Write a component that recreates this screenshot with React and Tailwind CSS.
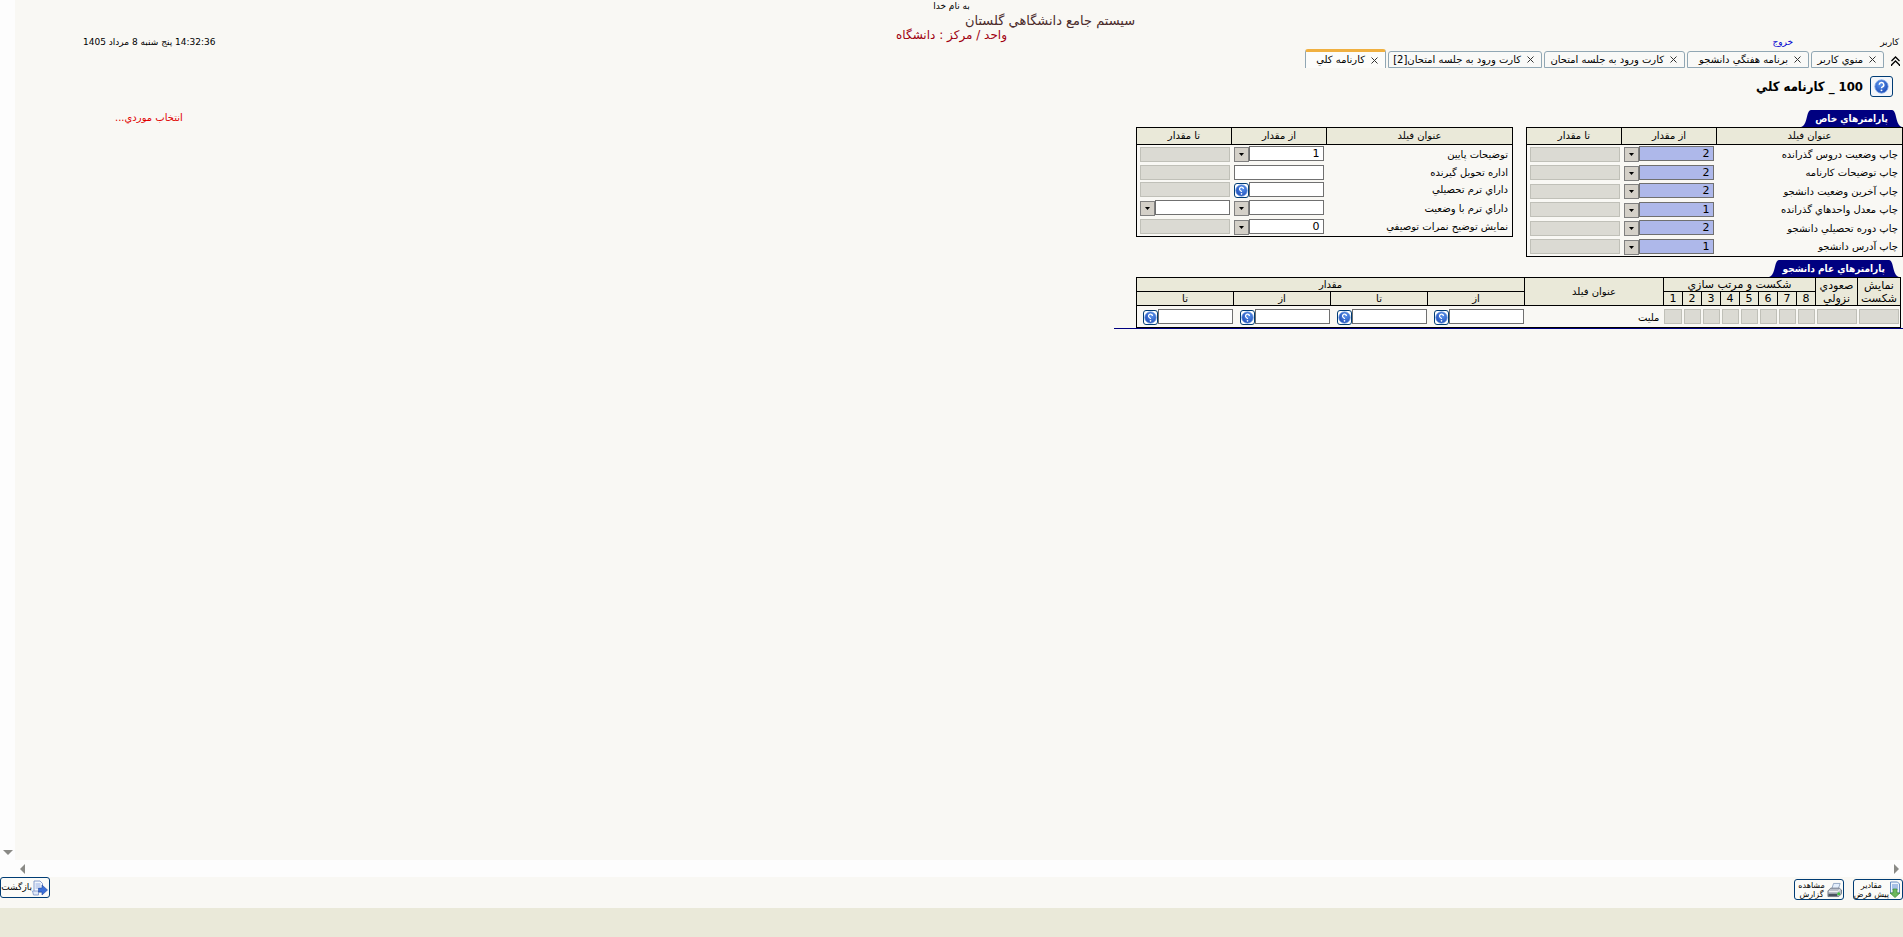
import React, { useState } from "react";

const specialParams = [
  { label: "چاپ وضعيت دروس گذرانده", from: "2" },
  { label: "چاپ توضيحات کارنامه", from: "2" },
  { label: "چاپ آخرين وضعيت دانشجو", from: "2" },
  { label: "چاپ معدل واحدهاي گذرانده", from: "1" },
  { label: "چاپ دوره تحصيلي دانشجو", from: "2" },
  { label: "چاپ آدرس دانشجو", from: "1" },
];

const extraParams = [
  { label: "توضيحات پايين", from: "1", picker: "list" },
  { label: "اداره تحويل گيرنده", from: "", picker: "none" },
  { label: "داراي ترم تحصيلي", from: "", picker: "help" },
  { label: "داراي ترم با وضعيت", from: "", picker: "list", to: true },
  { label: "نمايش توضيح نمرات توصيفي", from: "0", picker: "list" },
];

const tabs = [
  { title: "منوي کاربر", width: "w-[73px]" },
  { title: "برنامه هفتگي دانشجو", width: "w-[122px]" },
  { title: "کارت ورود به جلسه امتحان", width: "w-[141px]" },
  { title: "کارت ورود به جلسه امتحان[2]", width: "w-[154px]" },
  { title: "کارنامه کلي", width: "w-[81px]" },
];

const sortOrders = ["8", "7", "6", "5", "4", "3", "2", "1"];
const ranges = ["از", "تا", "از", "تا"];

const QuestionIcon = ({ flip }) => (
  <svg viewBox="0 0 14 14" className={flip ? "h-full w-full -scale-x-100" : "h-full w-full"}>
    <defs>
      <radialGradient id="ball" cx="40%" cy="35%" r="70%">
        <stop offset="0" stopColor="#5b95ee" />
        <stop offset="1" stopColor="#1c49b4" />
      </radialGradient>
    </defs>
    <circle cx="7" cy="7" r="6.2" fill="url(#ball)" stroke="#7ea7e6" strokeWidth="0.8" />
    <path d="M4.9 5.4a2.1 2.1 0 1 1 3 1.9c-.6.3-.9.6-.9 1.3" fill="none" stroke="#fff" strokeWidth="1.4" />
    <circle cx="7" cy="10.6" r="0.9" fill="#fff" />
  </svg>
);

const ListButton = ({ label }) => (
  <button
    type="button"
    aria-label={label}
    className="mt-px flex h-[15px] w-[15px] shrink-0 items-center justify-center border border-[#808080] bg-[#d4d0c8]"
  >
    <svg viewBox="0 0 5 3" className="h-[3px] w-[5px]">
      <path d="M0 0h5L2.5 3z" fill="#000" />
    </svg>
  </button>
);

const HelpButton = ({ label }) => (
  <button
    type="button"
    aria-label={label}
    className="mt-px h-[15px] w-[15px] shrink-0 rounded-[3px] border border-[#003c74] bg-white"
  >
    <QuestionIcon flip />
  </button>
);

const Field = ({ label, value = "", picker = "none", tint }) => (
  <div className="flex w-[90px] items-start">
    <input
      type="text"
      dir="ltr"
      aria-label={label}
      defaultValue={value}
      className={
        tint
          ? "h-[15px] min-w-0 flex-1 border border-[#707070] bg-[#aeb8ea] px-[3px] text-right text-[11px] leading-[13px] outline-none"
          : "h-[15px] min-w-0 flex-1 border border-[#707070] bg-white px-[3px] text-right text-[11px] leading-[13px] outline-none"
      }
    />
    {picker === "list" && <ListButton label={"فهرست " + label} />}
    {picker === "help" && <HelpButton label={"راهنماي " + label} />}
  </div>
);

const Disabled = ({ label }) => (
  <input
    type="text"
    disabled
    aria-label={label}
    className="block h-[15px] w-full border border-[#c0c0b8] bg-[#dbdad3]"
  />
);

const ParamTable = ({ rows, tint, size }) => (
  <table className={"w-[377px] table-fixed border-collapse border border-black text-[10px] leading-[14px] " + size}>
    <colgroup>
      <col />
      <col className="w-[95px]" />
      <col className="w-[95px]" />
    </colgroup>
    <thead className="bg-[#eae9d9]">
      <tr className="h-[17px]">
        <th className="border border-black p-0 font-normal">عنوان فيلد</th>
        <th className="border border-black p-0 font-normal">از مقدار</th>
        <th className="border border-black p-0 font-normal">تا مقدار</th>
      </tr>
    </thead>
    <tbody>
      {rows.map((row) => (
        <tr key={row.label}>
          <td className="p-0 pt-px pr-1 whitespace-nowrap">{row.label}</td>
          <td className="p-0 pr-[3px]">
            <Field label={row.label + " از"} value={row.from} picker={row.picker || "list"} tint={tint} />
          </td>
          <td className="p-0 pr-[2px]">
            {row.to ? (
              <Field label={row.label + " تا"} picker="list" />
            ) : (
              <div className="w-[90px]">
                <Disabled label={row.label + " تا"} />
              </div>
            )}
          </td>
        </tr>
      ))}
    </tbody>
  </table>
);

const SectionTitle = ({ children }) => (
  <div className="flex h-[17px] text-[#000080]">
    <svg viewBox="0 0 10 17" className="h-[17px] w-[10px]">
      <path d="M0 0C5 0 3 15 10 17H0z" fill="currentColor" />
    </svg>
    <h2 className="bg-[#000080] px-1 text-[10px] leading-[18px] font-bold whitespace-nowrap text-white [font-family:'DejaVu_Sans_Condensed','DejaVu_Sans',sans-serif]">
      {children}
    </h2>
    <svg viewBox="0 0 10 17" className="h-[17px] w-[10px]">
      <path d="M10 0C5 0 7 15 0 17H10z" fill="currentColor" />
    </svg>
  </div>
);

const StudentTable = () => (
  <table className="w-[765px] table-fixed border-collapse border border-black text-[11px] leading-[13px]">
    <colgroup>
      <col className="w-[43px]" />
      <col className="w-[42px]" />
      {sortOrders.map((n) => (
        <col key={n} className="w-[19px]" />
      ))}
      <col />
      <col className="w-[97px]" />
      <col className="w-[97px]" />
      <col className="w-[97px]" />
      <col className="w-[97px]" />
    </colgroup>
    <thead className="bg-[#eae9d9]">
      <tr className="h-[14px]">
        <th rowSpan={2} className="border border-black p-0 font-normal">نمايش شکست</th>
        <th rowSpan={2} className="border border-black p-0 font-normal">صعودي نزولي</th>
        <th colSpan={8} className="border border-black p-0 font-normal">شکست و مرتب سازي</th>
        <th rowSpan={2} className="border border-black p-0 text-[10px] font-normal">عنوان فيلد</th>
        <th colSpan={4} className="border border-black p-0 text-[10px] font-normal">مقدار</th>
      </tr>
      <tr className="h-[14px]">
        {sortOrders.map((n) => (
          <th key={n} className="border border-black p-0 font-normal">{n}</th>
        ))}
        {ranges.map((range, index) => (
          <th key={index} className="border border-black p-0 text-[10px] font-normal">{range}</th>
        ))}
      </tr>
    </thead>
    <tbody>
      <tr className="h-[22px]">
        <td className="px-px py-0"><Disabled label="نمايش شکست" /></td>
        <td className="px-px py-0"><Disabled label="صعودي نزولي" /></td>
        {sortOrders.map((n) => (
          <td key={n} className="px-px py-0"><Disabled label={"ترتيب " + n} /></td>
        ))}
        <td className="p-0 pt-[2px] pr-1 text-[10px]">مليت</td>
        {ranges.map((range, index) => (
          <td key={index} className="p-0 pr-px">
            <Field label={"مليت " + range} picker="help" />
          </td>
        ))}
      </tr>
    </tbody>
  </table>
);

const DefaultsIcon = () => (
  <svg viewBox="0 0 12 17" className="h-[17px] w-[12px] shrink-0">
    <path d="M1.5 1h7l2 2v9h-9z" fill="#eef4fc" stroke="#6a8fc4" />
    <path d="M3 4h6M3 6h6M3 8h6" stroke="#5f8cd0" />
    <path d="M4 8h4v4h3l-5 4.500L1 12h3z" fill="#6cb85c" stroke="#3d8a38" strokeWidth="0.7" />
  </svg>
);

const PrinterIcon = () => (
  <svg viewBox="0 0 16 16" className="h-[16px] w-[15px] shrink-0">
    <path d="M5 7l2-6h7l-2 6z" fill="#e4effc" stroke="#7d94b4" strokeWidth="0.8" />
    <path d="M1 9l3-3h9l2.500 2v4l-3 3H1z" fill="#b8bec8" stroke="#5d6674" strokeWidth="0.8" />
    <path d="M2 9.500h9.500L14 7.500" fill="none" stroke="#f4f6f8" />
    <path d="M1.500 12h9.500v2.500H1.500z" fill="#4a525e" />
    <circle cx="12.500" cy="12" r="1.600" fill="#3fc23f" />
  </svg>
);

const ReturnIcon = () => (
  <svg viewBox="0 0 16 16" className="h-[16px] w-[16px] shrink-0">
    <path d="M2 1h6l2.500 2.500V12H2z" fill="#f3f7fd" stroke="#7a93c8" strokeWidth="0.9" />
    <path d="M3.500 4h5M3.500 6h5M3.500 8h3" stroke="#7f9ddb" strokeWidth="0.8" />
    <path d="M0.500 11h6v4h-5z" fill="#dfe8f8" stroke="#7a93c8" strokeWidth="0.8" />
    <path d="M6.500 8H10V5l5.500 5L10 15v-3H6.500z" fill="#3c70d8" stroke="#2348a0" strokeWidth="0.6" />
  </svg>
);

const ImageButton = ({ lines, children }) => (
  <button
    type="button"
    className="flex h-[21px] w-[50px] items-center rounded-[3px] border border-[#003c74] bg-[#fbfbf8] px-px leading-[9px]"
  >
    {children}
    <span
      className={
        lines.length > 1
          ? "flex flex-1 flex-col items-center text-[8px] whitespace-nowrap"
          : "flex flex-1 flex-col items-center text-[9px] whitespace-nowrap"
      }
    >
      {lines.map((line) => (
        <span key={line}>{line}</span>
      ))}
    </span>
  </button>
);

const App = () => {
  const [activeTab, setActiveTab] = useState(4);

  return (
    <div
      dir="rtl"
      className="flex min-h-screen flex-col bg-[#f9f8f4] text-black [font-family:'DejaVu_Sans',sans-serif]"
    >
      <div className="bg-[linear-gradient(to_right,#fdfdfd_15px,transparent_15px)]">
        <header className="grid h-[49px] grid-cols-[1fr_auto_1fr] items-start">
          <div className="flex gap-[87px] pt-9 pr-1 text-[9px] leading-[12px]">
            <span>کاربر</span>
            <a href="#logout" className="text-[#0000d0]">خروج</a>
          </div>
          <div className="flex flex-col items-center whitespace-nowrap">
            <p className="text-[9px] leading-[12px]">به نام خدا</p>
            <h1 className="pl-[197px] text-[13px] leading-[17px] text-[#4a2a2a]">سيستم جامع دانشگاهي گلستان</h1>
            <p className="text-[12px] leading-[13px] text-[#a00010]">واحد / مرکز : دانشگاه</p>
          </div>
          <p dir="ltr" className="pt-9 pl-[83px] text-left text-[9px] leading-[12px]">
            <bdi dir="rtl">14:32:36 پنج شنبه 8 مرداد 1405</bdi>
          </p>
        </header>

        <nav className="flex h-[19px] items-end pr-[3px]">
          <button type="button" aria-label="صفحه اصلي" className="ml-[7px] h-[13px] w-[9px]">
            <svg viewBox="0 0 9 11" className="h-[11px] w-[9px]" fill="none" stroke="#000" strokeWidth="1.300">
              <path d="M0.500 5l4-4 4 4M0.500 10V9l4-4 4 4v1" />
            </svg>
          </button>
          <div className="flex items-end gap-[2px]">
            {tabs.map((tab, index) => (
              <div key={tab.title} className={tab.width}>
                <div
                  className={
                    index === activeTab
                      ? "flex h-[19px] items-center gap-[6px] rounded-t-[3px] border-x border-t-[3px] border-x-[#91a7b4] border-t-[#f0b040] bg-[#fcfcfa] pr-[7px]"
                      : "flex h-[17px] items-center gap-[6px] rounded-t-[3px] border border-[#91a7b4] bg-[#f9f9f7] pr-[7px]"
                  }
                >
                  <button type="button" aria-label={"بستن " + tab.title} className="h-[7px] w-[7px] shrink-0">
                    <svg viewBox="0 0 7 7" className="h-[7px] w-[7px]" stroke="#333" strokeWidth="1">
                      <path d="M0.500 0.500l6 6M6.500 0.500l-6 6" />
                    </svg>
                  </button>
                  <button
                    type="button"
                    onClick={() => setActiveTab(index)}
                    className="text-[10px] leading-[14px] whitespace-nowrap"
                  >
                    {tab.title}
                  </button>
                </div>
              </div>
            ))}
          </div>
        </nav>
      </div>

      <div className="flex flex-1">
        <main className="flex-1">
          <div className="flex items-center gap-[7px] pt-2 pr-[10px]">
            <button
              type="button"
              aria-label="راهنما"
              className="h-[21px] w-[23px] rounded-[3px] border border-[#003c74] bg-[#f4f6fa] px-[3px] py-[2px]"
            >
              <QuestionIcon />
            </button>
            <h2 className="text-[13px] leading-[18px] font-bold [font-family:'DejaVu_Sans_Condensed','DejaVu_Sans',sans-serif]">
              100 _ کارنامه کلي
            </h2>
          </div>

          <div className="flex items-start justify-between pt-[13px]">
            <div>
              <div className="pr-px">
                <SectionTitle>پارامترهاي خاص</SectionTitle>
              </div>
              <div className="flex items-start gap-[13px]">
                <ParamTable rows={specialParams} tint size="h-[130px]" />
                <ParamTable rows={extraParams} size="h-[110px]" />
              </div>
            </div>
            <a href="#select" className="pt-px pl-[100px] text-[10px] leading-[14px] text-[#e00000]">
              انتخاب موردي...
            </a>
          </div>

          <div className="flex">
            <div className="border-b border-[#000080] pr-[2px] pl-[22px]">
              <div className="pt-[3px] pr-[2px]">
                <SectionTitle>پارامترهاي عام دانشجو</SectionTitle>
              </div>
              <StudentTable />
            </div>
          </div>
        </main>
        <div className="flex w-[15px] items-end justify-center bg-[#fdfdfd] pb-[5px]">
          <svg viewBox="0 0 10 5" className="h-[5px] w-[10px]">
            <path d="M0 0h10L5 5z" fill="#8a8a86" />
          </svg>
        </div>
      </div>

      <div className="flex h-[17px] items-center justify-between bg-[#fdfdfd] pr-1 pl-5">
        <svg viewBox="0 0 5 10" className="h-[10px] w-[5px]">
          <path d="M0 0v10l5-5z" fill="#8a8a86" />
        </svg>
        <svg viewBox="0 0 5 10" className="h-[10px] w-[5px]">
          <path d="M5 0v10L0 5z" fill="#8a8a86" />
        </svg>
      </div>

      <div className="flex h-[31px] items-start justify-between">
        <div className="flex gap-[9px] pt-[2px]">
          <ImageButton lines={["مقادير", "پيش فرض"]}>
            <DefaultsIcon />
          </ImageButton>
          <ImageButton lines={["مشاهده", "گزارش"]}>
            <PrinterIcon />
          </ImageButton>
        </div>
        <ImageButton lines={["بازگشت"]}>
          <ReturnIcon />
        </ImageButton>
      </div>

      <footer className="h-[29px] bg-[#eae9d9]" />
    </div>
  );
};

export default App;
